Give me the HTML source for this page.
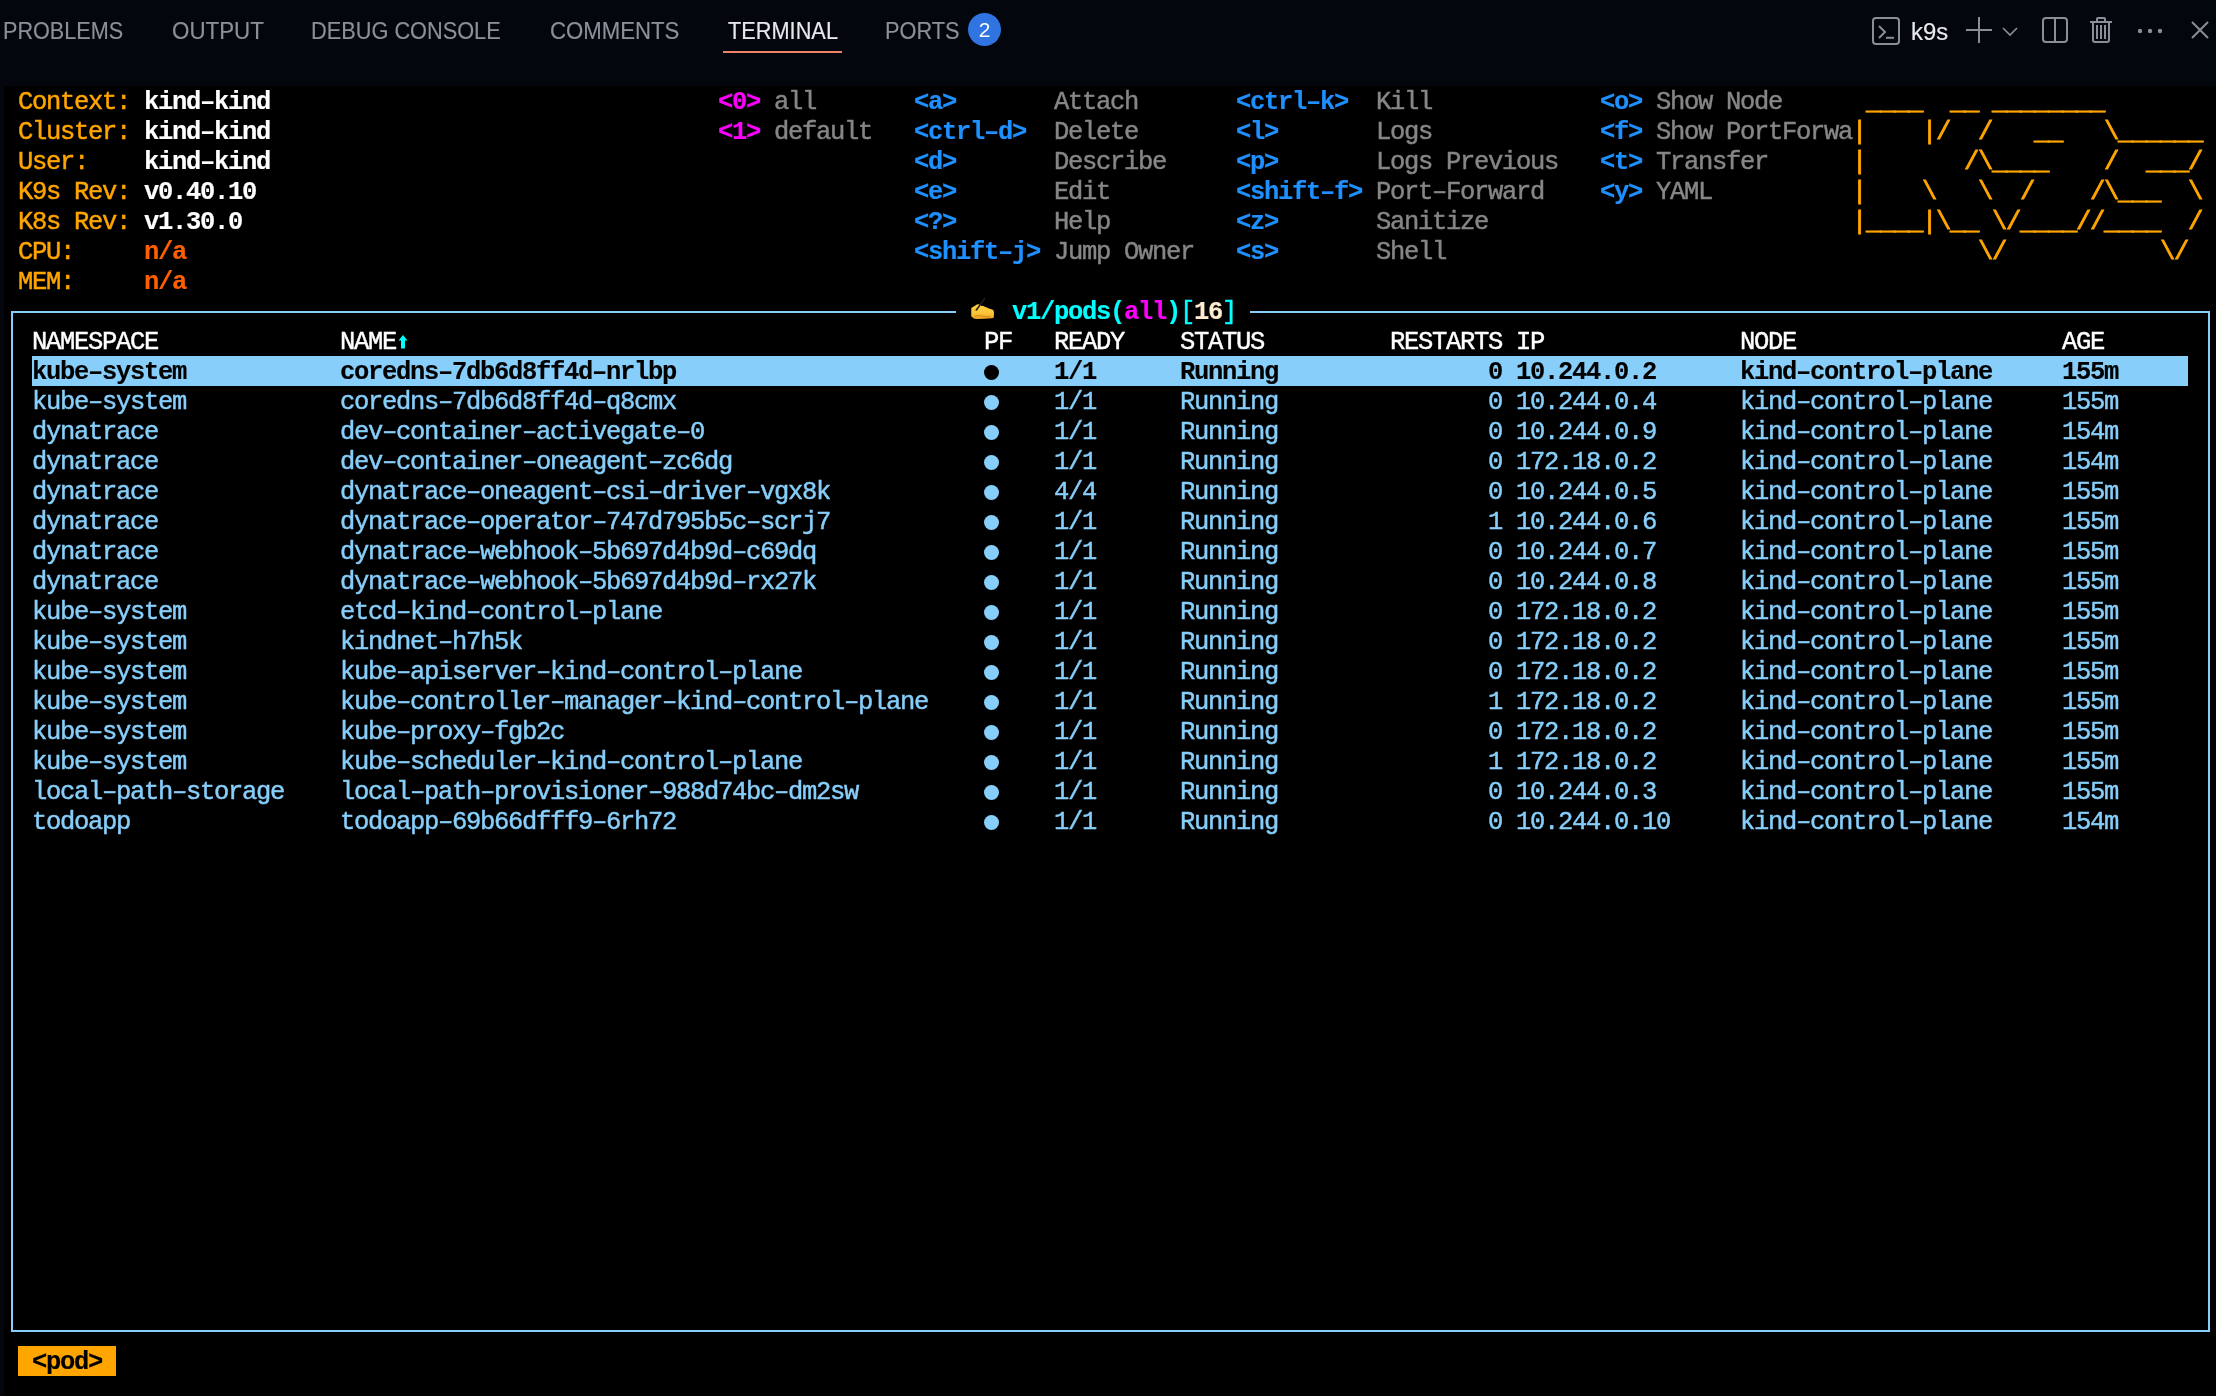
<!DOCTYPE html>
<html><head><meta charset="utf-8"><style>
html,body{margin:0;padding:0}
body{width:2216px;height:1396px;background:#03060c;position:relative;overflow:hidden;font-family:"Liberation Sans",sans-serif}
#term{position:absolute;left:4px;top:86px;width:2212px;height:1310px;background:#000}
.t{position:absolute;white-space:pre;font-family:"Liberation Mono",monospace;font-size:25.5px;line-height:30px;letter-spacing:-1.3025px;height:30px;-webkit-text-stroke:0.45px currentColor}
.tab{position:absolute;top:15px;transform-origin:0 0;font-size:23px;line-height:32px;color:#8b9199;white-space:pre;-webkit-text-stroke:0.15px currentColor}
.bl{position:absolute;background:#87cefa}
.dot{position:absolute;left:984px;width:15px;height:15px;border-radius:50%}
</style></head>
<body>
<div style="position:absolute;left:0;top:0;width:2216px;height:86px;will-change:transform">
<div class="tab" style="left:3.42px;transform:scaleX(0.94)">PROBLEMS</div>
<div class="tab" style="left:171.73px;transform:scaleX(0.972)">OUTPUT</div>
<div class="tab" style="left:311.01px;transform:scaleX(0.9455)">DEBUG CONSOLE</div>
<div class="tab" style="left:549.94px;transform:scaleX(0.9644)">COMMENTS</div>
<div class="tab" style="left:727.8px;transform:scaleX(0.9457);color:#e7e9ec">TERMINAL</div>
<div style="position:absolute;left:723px;top:51px;width:119px;height:2px;background:#f0826a"></div>
<div class="tab" style="left:885.21px;transform:scaleX(0.9461)">PORTS</div>
<div style="position:absolute;left:968px;top:13px;width:33px;height:33px;border-radius:50%;background:#2f74e0;color:#fff;font-size:21px;line-height:33px;text-align:center">2</div>
<div class="tab" style="left:1910.76px;top:15.5px;transform:scaleX(1.038);color:#e7e9ec">k9s</div>
<svg style="position:absolute;left:0;top:0" width="2216" height="86" fill="none" stroke="#898f97" stroke-width="2">
  <rect x="1873" y="18" width="26" height="26" rx="3"/>
  <path d="M1879 26 L1885 32 L1879 38" />
  <path d="M1886 37.8 H1894" />
  <path d="M1966 30 H1992 M1979 17 V43" />
  <path d="M2003 28 L2010 35 L2017 28" stroke-width="1.6"/>
  <rect x="2043" y="18" width="24" height="24" rx="3"/>
  <path d="M2055 18 V42" />
  <path d="M2090 22 H2112" />
  <path d="M2097 22 V19 Q2097 18 2098 18 H2104 Q2105 18 2105 19 V22" />
  <path d="M2093 22 V40 Q2093 42 2095 42 H2107 Q2109 42 2109 40 V22" />
  <path d="M2097 25 V39 M2101 25 V39 M2105 25 V39" />
  <path d="M2192 22 L2208 38 M2208 22 L2192 38" />
  <circle cx="2140" cy="31" r="2.2" fill="#898f97" stroke="none"/>
  <circle cx="2150" cy="31" r="2.2" fill="#898f97" stroke="none"/>
  <circle cx="2160" cy="31" r="2.2" fill="#898f97" stroke="none"/>
</svg>
</div>
<div id="term"></div>

<div class="bl" style="left:11px;top:311px;width:945px;height:2px"></div>
<div class="bl" style="left:1250px;top:311px;width:960px;height:2px"></div>
<div class="bl" style="left:11px;top:311px;width:2px;height:1021px"></div>
<div class="bl" style="left:2208px;top:311px;width:2px;height:1021px"></div>
<div class="bl" style="left:11px;top:1330px;width:1199px;height:2px"></div>
<div class="bl" style="left:11px;top:1330px;width:2199px;height:2px"></div>
<div style="position:absolute;left:32px;top:356px;width:2156px;height:30px;background:#87cefa"></div>
<div style="position:absolute;left:18px;top:1346px;width:98px;height:30px;background:#ffa500"></div>


<svg style="position:absolute;left:960px;top:296px" width="50" height="30" viewBox="0 0 50 30">
  <defs><linearGradient id="hg" x1="0" y1="0" x2="0" y2="1">
    <stop offset="0" stop-color="#ffd43a"/><stop offset="0.6" stop-color="#fcc43c"/><stop offset="1" stop-color="#eea21f"/></linearGradient></defs>
  <path d="M11.3 12 L17 8.5 Q19 7.9 20.3 9 L21 10 L22.6 9.8 L26 11.3 L29 12.6 L32.8 13.8 Q34 14.8 34 17 L33.8 21.2 Q33.5 22.3 32 22.3 L24 22.7 L16 23 Q13.2 22.6 11.2 20.2 Z" fill="url(#hg)"/>
  <path d="M14 15 Q15.5 12.5 17.5 11.5 L16.5 14.5 Q15 15.5 14 15 Z" fill="#d98a12" opacity="0.8"/>
  <path d="M14.5 20.5 Q18 18.8 21.5 20 Q26 21 31 20.8" stroke="#c9780e" stroke-width="1" fill="none" opacity="0.7"/>
  <path d="M24.6 2.4 L16.6 13.8" stroke="#222" stroke-width="1.6" stroke-linecap="round"/>
</svg>
<svg style="position:absolute;left:396.4px;top:331.3px" width="14" height="20" viewBox="0 0 14 20">
  <path d="M7 4 L11.5 9.5 H9 V17.5 H5 V9.5 H2.5 Z" fill="#00ffff"/>
</svg>

<div class="dot" style="top:365px;background:#000"></div>
<div class="dot" style="top:395px;background:#87cefa"></div>
<div class="dot" style="top:425px;background:#87cefa"></div>
<div class="dot" style="top:455px;background:#87cefa"></div>
<div class="dot" style="top:485px;background:#87cefa"></div>
<div class="dot" style="top:515px;background:#87cefa"></div>
<div class="dot" style="top:545px;background:#87cefa"></div>
<div class="dot" style="top:575px;background:#87cefa"></div>
<div class="dot" style="top:605px;background:#87cefa"></div>
<div class="dot" style="top:635px;background:#87cefa"></div>
<div class="dot" style="top:665px;background:#87cefa"></div>
<div class="dot" style="top:695px;background:#87cefa"></div>
<div class="dot" style="top:725px;background:#87cefa"></div>
<div class="dot" style="top:755px;background:#87cefa"></div>
<div class="dot" style="top:785px;background:#87cefa"></div>
<div class="dot" style="top:815px;background:#87cefa"></div>
<div id="txt" style="position:absolute;left:0;top:0;width:2216px;height:1396px;will-change:transform">
<div class="t" style="left:18px;top:88.0px;color:#ffa500">Context: </div>
<div class="t" style="left:144px;top:88.0px;color:#ffffff;font-weight:bold;-webkit-text-stroke:0.15px currentColor">kind&#8211;kind</div>
<div class="t" style="left:718px;top:88.0px;color:#ff00ff;font-weight:bold;-webkit-text-stroke:0.15px currentColor">&lt;0&gt;</div>
<div class="t" style="left:774px;top:88.0px;color:#868686">all</div>
<div class="t" style="left:914px;top:88.0px;color:#1e90ff;font-weight:bold;-webkit-text-stroke:0.15px currentColor">&lt;a&gt;</div>
<div class="t" style="left:1054px;top:88.0px;color:#868686">Attach</div>
<div class="t" style="left:1236px;top:88.0px;color:#1e90ff;font-weight:bold;-webkit-text-stroke:0.15px currentColor">&lt;ctrl&#8211;k&gt;</div>
<div class="t" style="left:1376px;top:88.0px;color:#868686">Kill</div>
<div class="t" style="left:1600px;top:88.0px;color:#1e90ff;font-weight:bold;-webkit-text-stroke:0.15px currentColor">&lt;o&gt;</div>
<div class="t" style="left:1656px;top:88.0px;color:#868686">Show Node</div>
<div class="t" style="left:1852px;top:88.0px;color:#ffa500;-webkit-text-stroke:0.8px currentColor"> ____  __ ________       </div>
<div class="t" style="left:18px;top:118.0px;color:#ffa500">Cluster: </div>
<div class="t" style="left:144px;top:118.0px;color:#ffffff;font-weight:bold;-webkit-text-stroke:0.15px currentColor">kind&#8211;kind</div>
<div class="t" style="left:718px;top:118.0px;color:#ff00ff;font-weight:bold;-webkit-text-stroke:0.15px currentColor">&lt;1&gt;</div>
<div class="t" style="left:774px;top:118.0px;color:#868686">default</div>
<div class="t" style="left:914px;top:118.0px;color:#1e90ff;font-weight:bold;-webkit-text-stroke:0.15px currentColor">&lt;ctrl&#8211;d&gt;</div>
<div class="t" style="left:1054px;top:118.0px;color:#868686">Delete</div>
<div class="t" style="left:1236px;top:118.0px;color:#1e90ff;font-weight:bold;-webkit-text-stroke:0.15px currentColor">&lt;l&gt;</div>
<div class="t" style="left:1376px;top:118.0px;color:#868686">Logs</div>
<div class="t" style="left:1600px;top:118.0px;color:#1e90ff;font-weight:bold;-webkit-text-stroke:0.15px currentColor">&lt;f&gt;</div>
<div class="t" style="left:1656px;top:118.0px;color:#868686">Show PortForwa</div>
<div class="t" style="left:1852px;top:118.0px;color:#ffa500;-webkit-text-stroke:0.8px currentColor">|    |/  /   __   \______</div>
<div class="t" style="left:18px;top:148.0px;color:#ffa500">User:    </div>
<div class="t" style="left:144px;top:148.0px;color:#ffffff;font-weight:bold;-webkit-text-stroke:0.15px currentColor">kind&#8211;kind</div>
<div class="t" style="left:914px;top:148.0px;color:#1e90ff;font-weight:bold;-webkit-text-stroke:0.15px currentColor">&lt;d&gt;</div>
<div class="t" style="left:1054px;top:148.0px;color:#868686">Describe</div>
<div class="t" style="left:1236px;top:148.0px;color:#1e90ff;font-weight:bold;-webkit-text-stroke:0.15px currentColor">&lt;p&gt;</div>
<div class="t" style="left:1376px;top:148.0px;color:#868686">Logs Previous</div>
<div class="t" style="left:1600px;top:148.0px;color:#1e90ff;font-weight:bold;-webkit-text-stroke:0.15px currentColor">&lt;t&gt;</div>
<div class="t" style="left:1656px;top:148.0px;color:#868686">Transfer</div>
<div class="t" style="left:1852px;top:148.0px;color:#ffa500;-webkit-text-stroke:0.8px currentColor">|       /\____    /  ___/</div>
<div class="t" style="left:18px;top:178.0px;color:#ffa500">K9s Rev: </div>
<div class="t" style="left:144px;top:178.0px;color:#ffffff;font-weight:bold;-webkit-text-stroke:0.15px currentColor">v0.40.10</div>
<div class="t" style="left:914px;top:178.0px;color:#1e90ff;font-weight:bold;-webkit-text-stroke:0.15px currentColor">&lt;e&gt;</div>
<div class="t" style="left:1054px;top:178.0px;color:#868686">Edit</div>
<div class="t" style="left:1236px;top:178.0px;color:#1e90ff;font-weight:bold;-webkit-text-stroke:0.15px currentColor">&lt;shift&#8211;f&gt;</div>
<div class="t" style="left:1376px;top:178.0px;color:#868686">Port&#8211;Forward</div>
<div class="t" style="left:1600px;top:178.0px;color:#1e90ff;font-weight:bold;-webkit-text-stroke:0.15px currentColor">&lt;y&gt;</div>
<div class="t" style="left:1656px;top:178.0px;color:#868686">YAML</div>
<div class="t" style="left:1852px;top:178.0px;color:#ffa500;-webkit-text-stroke:0.8px currentColor">|    \   \  /    /\___  \</div>
<div class="t" style="left:18px;top:208.0px;color:#ffa500">K8s Rev: </div>
<div class="t" style="left:144px;top:208.0px;color:#ffffff;font-weight:bold;-webkit-text-stroke:0.15px currentColor">v1.30.0</div>
<div class="t" style="left:914px;top:208.0px;color:#1e90ff;font-weight:bold;-webkit-text-stroke:0.15px currentColor">&lt;?&gt;</div>
<div class="t" style="left:1054px;top:208.0px;color:#868686">Help</div>
<div class="t" style="left:1236px;top:208.0px;color:#1e90ff;font-weight:bold;-webkit-text-stroke:0.15px currentColor">&lt;z&gt;</div>
<div class="t" style="left:1376px;top:208.0px;color:#868686">Sanitize</div>
<div class="t" style="left:1852px;top:208.0px;color:#ffa500;-webkit-text-stroke:0.8px currentColor">|____|\__ \/____//____  /</div>
<div class="t" style="left:18px;top:238.0px;color:#ffa500">CPU:     </div>
<div class="t" style="left:144px;top:238.0px;color:#ff5f00;font-weight:bold;-webkit-text-stroke:0.15px currentColor">n/a</div>
<div class="t" style="left:914px;top:238.0px;color:#1e90ff;font-weight:bold;-webkit-text-stroke:0.15px currentColor">&lt;shift&#8211;j&gt;</div>
<div class="t" style="left:1054px;top:238.0px;color:#868686">Jump Owner</div>
<div class="t" style="left:1236px;top:238.0px;color:#1e90ff;font-weight:bold;-webkit-text-stroke:0.15px currentColor">&lt;s&gt;</div>
<div class="t" style="left:1376px;top:238.0px;color:#868686">Shell</div>
<div class="t" style="left:1852px;top:238.0px;color:#ffa500;-webkit-text-stroke:0.8px currentColor">         \/           \/ </div>
<div class="t" style="left:18px;top:268.0px;color:#ffa500">MEM:     </div>
<div class="t" style="left:144px;top:268.0px;color:#ff5f00;font-weight:bold;-webkit-text-stroke:0.15px currentColor">n/a</div>
<div class="t" style="left:1012px;top:298.0px;color:#00ffff;font-weight:bold;-webkit-text-stroke:0.15px currentColor">v1/pods(</div>
<div class="t" style="left:1124px;top:298.0px;color:#ff00ff;font-weight:bold;-webkit-text-stroke:0.15px currentColor">all</div>
<div class="t" style="left:1166px;top:298.0px;color:#00ffff;font-weight:bold;-webkit-text-stroke:0.15px currentColor">)</div>
<div class="t" style="left:1180px;top:298.0px;color:#00ffff">[</div>
<div class="t" style="left:1194px;top:298.0px;color:#ffebcd;font-weight:bold;-webkit-text-stroke:0.15px currentColor">16</div>
<div class="t" style="left:1222px;top:298.0px;color:#00ffff">]</div>
<div class="t" style="left:32px;top:328.0px;color:#ffffff">NAMESPACE</div>
<div class="t" style="left:340px;top:328.0px;color:#ffffff">NAME</div>
<div class="t" style="left:984px;top:328.0px;color:#ffffff">PF</div>
<div class="t" style="left:1054px;top:328.0px;color:#ffffff">READY</div>
<div class="t" style="left:1180px;top:328.0px;color:#ffffff">STATUS</div>
<div class="t" style="left:1390px;top:328.0px;color:#ffffff">RESTARTS</div>
<div class="t" style="left:1516px;top:328.0px;color:#ffffff">IP</div>
<div class="t" style="left:1740px;top:328.0px;color:#ffffff">NODE</div>
<div class="t" style="left:2062px;top:328.0px;color:#ffffff">AGE</div>
<div class="t" style="left:32px;top:358.0px;color:#000000;font-weight:bold;-webkit-text-stroke:0.15px currentColor">kube&#8211;system</div>
<div class="t" style="left:340px;top:358.0px;color:#000000;font-weight:bold;-webkit-text-stroke:0.15px currentColor">coredns&#8211;7db6d8ff4d&#8211;nrlbp</div>
<div class="t" style="left:1054px;top:358.0px;color:#000000;font-weight:bold;-webkit-text-stroke:0.15px currentColor">1/1</div>
<div class="t" style="left:1180px;top:358.0px;color:#000000;font-weight:bold;-webkit-text-stroke:0.15px currentColor">Running</div>
<div class="t" style="left:1488px;top:358.0px;color:#000000;font-weight:bold;-webkit-text-stroke:0.15px currentColor">0</div>
<div class="t" style="left:1516px;top:358.0px;color:#000000;font-weight:bold;-webkit-text-stroke:0.15px currentColor">10.244.0.2</div>
<div class="t" style="left:1740px;top:358.0px;color:#000000;font-weight:bold;-webkit-text-stroke:0.15px currentColor">kind&#8211;control&#8211;plane</div>
<div class="t" style="left:2062px;top:358.0px;color:#000000;font-weight:bold;-webkit-text-stroke:0.15px currentColor">155m</div>
<div class="t" style="left:32px;top:388.0px;color:#87cefa">kube&#8211;system</div>
<div class="t" style="left:340px;top:388.0px;color:#87cefa">coredns&#8211;7db6d8ff4d&#8211;q8cmx</div>
<div class="t" style="left:1054px;top:388.0px;color:#87cefa">1/1</div>
<div class="t" style="left:1180px;top:388.0px;color:#87cefa">Running</div>
<div class="t" style="left:1488px;top:388.0px;color:#87cefa">0</div>
<div class="t" style="left:1516px;top:388.0px;color:#87cefa">10.244.0.4</div>
<div class="t" style="left:1740px;top:388.0px;color:#87cefa">kind&#8211;control&#8211;plane</div>
<div class="t" style="left:2062px;top:388.0px;color:#87cefa">155m</div>
<div class="t" style="left:32px;top:418.0px;color:#87cefa">dynatrace</div>
<div class="t" style="left:340px;top:418.0px;color:#87cefa">dev&#8211;container&#8211;activegate&#8211;0</div>
<div class="t" style="left:1054px;top:418.0px;color:#87cefa">1/1</div>
<div class="t" style="left:1180px;top:418.0px;color:#87cefa">Running</div>
<div class="t" style="left:1488px;top:418.0px;color:#87cefa">0</div>
<div class="t" style="left:1516px;top:418.0px;color:#87cefa">10.244.0.9</div>
<div class="t" style="left:1740px;top:418.0px;color:#87cefa">kind&#8211;control&#8211;plane</div>
<div class="t" style="left:2062px;top:418.0px;color:#87cefa">154m</div>
<div class="t" style="left:32px;top:448.0px;color:#87cefa">dynatrace</div>
<div class="t" style="left:340px;top:448.0px;color:#87cefa">dev&#8211;container&#8211;oneagent&#8211;zc6dg</div>
<div class="t" style="left:1054px;top:448.0px;color:#87cefa">1/1</div>
<div class="t" style="left:1180px;top:448.0px;color:#87cefa">Running</div>
<div class="t" style="left:1488px;top:448.0px;color:#87cefa">0</div>
<div class="t" style="left:1516px;top:448.0px;color:#87cefa">172.18.0.2</div>
<div class="t" style="left:1740px;top:448.0px;color:#87cefa">kind&#8211;control&#8211;plane</div>
<div class="t" style="left:2062px;top:448.0px;color:#87cefa">154m</div>
<div class="t" style="left:32px;top:478.0px;color:#87cefa">dynatrace</div>
<div class="t" style="left:340px;top:478.0px;color:#87cefa">dynatrace&#8211;oneagent&#8211;csi&#8211;driver&#8211;vgx8k</div>
<div class="t" style="left:1054px;top:478.0px;color:#87cefa">4/4</div>
<div class="t" style="left:1180px;top:478.0px;color:#87cefa">Running</div>
<div class="t" style="left:1488px;top:478.0px;color:#87cefa">0</div>
<div class="t" style="left:1516px;top:478.0px;color:#87cefa">10.244.0.5</div>
<div class="t" style="left:1740px;top:478.0px;color:#87cefa">kind&#8211;control&#8211;plane</div>
<div class="t" style="left:2062px;top:478.0px;color:#87cefa">155m</div>
<div class="t" style="left:32px;top:508.0px;color:#87cefa">dynatrace</div>
<div class="t" style="left:340px;top:508.0px;color:#87cefa">dynatrace&#8211;operator&#8211;747d795b5c&#8211;scrj7</div>
<div class="t" style="left:1054px;top:508.0px;color:#87cefa">1/1</div>
<div class="t" style="left:1180px;top:508.0px;color:#87cefa">Running</div>
<div class="t" style="left:1488px;top:508.0px;color:#87cefa">1</div>
<div class="t" style="left:1516px;top:508.0px;color:#87cefa">10.244.0.6</div>
<div class="t" style="left:1740px;top:508.0px;color:#87cefa">kind&#8211;control&#8211;plane</div>
<div class="t" style="left:2062px;top:508.0px;color:#87cefa">155m</div>
<div class="t" style="left:32px;top:538.0px;color:#87cefa">dynatrace</div>
<div class="t" style="left:340px;top:538.0px;color:#87cefa">dynatrace&#8211;webhook&#8211;5b697d4b9d&#8211;c69dq</div>
<div class="t" style="left:1054px;top:538.0px;color:#87cefa">1/1</div>
<div class="t" style="left:1180px;top:538.0px;color:#87cefa">Running</div>
<div class="t" style="left:1488px;top:538.0px;color:#87cefa">0</div>
<div class="t" style="left:1516px;top:538.0px;color:#87cefa">10.244.0.7</div>
<div class="t" style="left:1740px;top:538.0px;color:#87cefa">kind&#8211;control&#8211;plane</div>
<div class="t" style="left:2062px;top:538.0px;color:#87cefa">155m</div>
<div class="t" style="left:32px;top:568.0px;color:#87cefa">dynatrace</div>
<div class="t" style="left:340px;top:568.0px;color:#87cefa">dynatrace&#8211;webhook&#8211;5b697d4b9d&#8211;rx27k</div>
<div class="t" style="left:1054px;top:568.0px;color:#87cefa">1/1</div>
<div class="t" style="left:1180px;top:568.0px;color:#87cefa">Running</div>
<div class="t" style="left:1488px;top:568.0px;color:#87cefa">0</div>
<div class="t" style="left:1516px;top:568.0px;color:#87cefa">10.244.0.8</div>
<div class="t" style="left:1740px;top:568.0px;color:#87cefa">kind&#8211;control&#8211;plane</div>
<div class="t" style="left:2062px;top:568.0px;color:#87cefa">155m</div>
<div class="t" style="left:32px;top:598.0px;color:#87cefa">kube&#8211;system</div>
<div class="t" style="left:340px;top:598.0px;color:#87cefa">etcd&#8211;kind&#8211;control&#8211;plane</div>
<div class="t" style="left:1054px;top:598.0px;color:#87cefa">1/1</div>
<div class="t" style="left:1180px;top:598.0px;color:#87cefa">Running</div>
<div class="t" style="left:1488px;top:598.0px;color:#87cefa">0</div>
<div class="t" style="left:1516px;top:598.0px;color:#87cefa">172.18.0.2</div>
<div class="t" style="left:1740px;top:598.0px;color:#87cefa">kind&#8211;control&#8211;plane</div>
<div class="t" style="left:2062px;top:598.0px;color:#87cefa">155m</div>
<div class="t" style="left:32px;top:628.0px;color:#87cefa">kube&#8211;system</div>
<div class="t" style="left:340px;top:628.0px;color:#87cefa">kindnet&#8211;h7h5k</div>
<div class="t" style="left:1054px;top:628.0px;color:#87cefa">1/1</div>
<div class="t" style="left:1180px;top:628.0px;color:#87cefa">Running</div>
<div class="t" style="left:1488px;top:628.0px;color:#87cefa">0</div>
<div class="t" style="left:1516px;top:628.0px;color:#87cefa">172.18.0.2</div>
<div class="t" style="left:1740px;top:628.0px;color:#87cefa">kind&#8211;control&#8211;plane</div>
<div class="t" style="left:2062px;top:628.0px;color:#87cefa">155m</div>
<div class="t" style="left:32px;top:658.0px;color:#87cefa">kube&#8211;system</div>
<div class="t" style="left:340px;top:658.0px;color:#87cefa">kube&#8211;apiserver&#8211;kind&#8211;control&#8211;plane</div>
<div class="t" style="left:1054px;top:658.0px;color:#87cefa">1/1</div>
<div class="t" style="left:1180px;top:658.0px;color:#87cefa">Running</div>
<div class="t" style="left:1488px;top:658.0px;color:#87cefa">0</div>
<div class="t" style="left:1516px;top:658.0px;color:#87cefa">172.18.0.2</div>
<div class="t" style="left:1740px;top:658.0px;color:#87cefa">kind&#8211;control&#8211;plane</div>
<div class="t" style="left:2062px;top:658.0px;color:#87cefa">155m</div>
<div class="t" style="left:32px;top:688.0px;color:#87cefa">kube&#8211;system</div>
<div class="t" style="left:340px;top:688.0px;color:#87cefa">kube&#8211;controller&#8211;manager&#8211;kind&#8211;control&#8211;plane</div>
<div class="t" style="left:1054px;top:688.0px;color:#87cefa">1/1</div>
<div class="t" style="left:1180px;top:688.0px;color:#87cefa">Running</div>
<div class="t" style="left:1488px;top:688.0px;color:#87cefa">1</div>
<div class="t" style="left:1516px;top:688.0px;color:#87cefa">172.18.0.2</div>
<div class="t" style="left:1740px;top:688.0px;color:#87cefa">kind&#8211;control&#8211;plane</div>
<div class="t" style="left:2062px;top:688.0px;color:#87cefa">155m</div>
<div class="t" style="left:32px;top:718.0px;color:#87cefa">kube&#8211;system</div>
<div class="t" style="left:340px;top:718.0px;color:#87cefa">kube&#8211;proxy&#8211;fgb2c</div>
<div class="t" style="left:1054px;top:718.0px;color:#87cefa">1/1</div>
<div class="t" style="left:1180px;top:718.0px;color:#87cefa">Running</div>
<div class="t" style="left:1488px;top:718.0px;color:#87cefa">0</div>
<div class="t" style="left:1516px;top:718.0px;color:#87cefa">172.18.0.2</div>
<div class="t" style="left:1740px;top:718.0px;color:#87cefa">kind&#8211;control&#8211;plane</div>
<div class="t" style="left:2062px;top:718.0px;color:#87cefa">155m</div>
<div class="t" style="left:32px;top:748.0px;color:#87cefa">kube&#8211;system</div>
<div class="t" style="left:340px;top:748.0px;color:#87cefa">kube&#8211;scheduler&#8211;kind&#8211;control&#8211;plane</div>
<div class="t" style="left:1054px;top:748.0px;color:#87cefa">1/1</div>
<div class="t" style="left:1180px;top:748.0px;color:#87cefa">Running</div>
<div class="t" style="left:1488px;top:748.0px;color:#87cefa">1</div>
<div class="t" style="left:1516px;top:748.0px;color:#87cefa">172.18.0.2</div>
<div class="t" style="left:1740px;top:748.0px;color:#87cefa">kind&#8211;control&#8211;plane</div>
<div class="t" style="left:2062px;top:748.0px;color:#87cefa">155m</div>
<div class="t" style="left:32px;top:778.0px;color:#87cefa">local&#8211;path&#8211;storage</div>
<div class="t" style="left:340px;top:778.0px;color:#87cefa">local&#8211;path&#8211;provisioner&#8211;988d74bc&#8211;dm2sw</div>
<div class="t" style="left:1054px;top:778.0px;color:#87cefa">1/1</div>
<div class="t" style="left:1180px;top:778.0px;color:#87cefa">Running</div>
<div class="t" style="left:1488px;top:778.0px;color:#87cefa">0</div>
<div class="t" style="left:1516px;top:778.0px;color:#87cefa">10.244.0.3</div>
<div class="t" style="left:1740px;top:778.0px;color:#87cefa">kind&#8211;control&#8211;plane</div>
<div class="t" style="left:2062px;top:778.0px;color:#87cefa">155m</div>
<div class="t" style="left:32px;top:808.0px;color:#87cefa">todoapp</div>
<div class="t" style="left:340px;top:808.0px;color:#87cefa">todoapp&#8211;69b66dfff9&#8211;6rh72</div>
<div class="t" style="left:1054px;top:808.0px;color:#87cefa">1/1</div>
<div class="t" style="left:1180px;top:808.0px;color:#87cefa">Running</div>
<div class="t" style="left:1488px;top:808.0px;color:#87cefa">0</div>
<div class="t" style="left:1516px;top:808.0px;color:#87cefa">10.244.0.10</div>
<div class="t" style="left:1740px;top:808.0px;color:#87cefa">kind&#8211;control&#8211;plane</div>
<div class="t" style="left:2062px;top:808.0px;color:#87cefa">154m</div>
<div class="t" style="left:18px;top:1348.0px;color:#000000;font-weight:bold;-webkit-text-stroke:0.15px currentColor"> &lt;pod&gt; </div>
</div>
</body></html>
